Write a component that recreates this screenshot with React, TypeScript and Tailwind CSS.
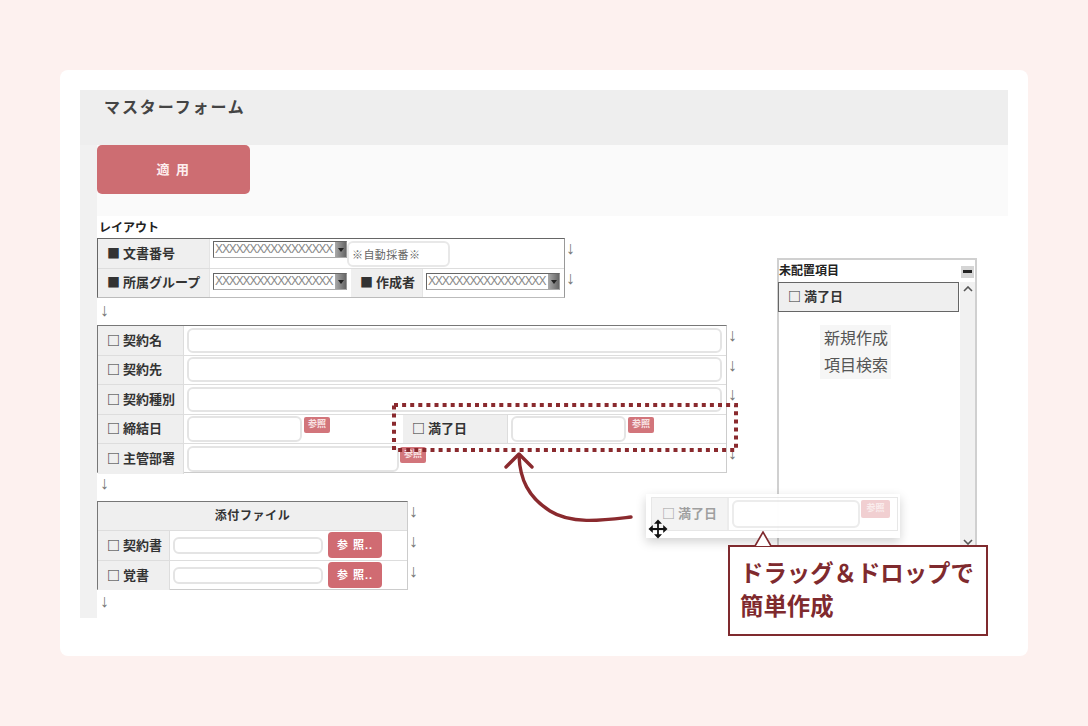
const cjk = "font-['Liberation_Sans','Noto_Sans_CJK_JP',sans-serif]";

function Arrow() {
  return <span className="block text-[18px] leading-none text-[#777] font-['Liberation_Sans',sans-serif]">↓</span>;
}

function Label({ text, className = "" }: { text: string; className?: string }) {
  return (
    <div className={`flex items-center bg-[#efefef] pb-[2px] pl-[9px] text-[13px] font-semibold text-[#333] whitespace-nowrap font-['Noto_Sans_CJK_JP',sans-serif] ${className}`}>
      {text}
    </div>
  );
}

function Select({ className = "" }: { className?: string }) {
  return (
    <div className={`flex h-[17px] w-[134px] border-[1.5px] border-[#666] border-r-[#999] border-b-[#aaa] bg-white ${className}`}>
      <span className="flex-1 whitespace-nowrap pl-[1px] text-[12px] leading-[14px] tracking-[-1.1px] text-[#888]">XXXXXXXXXXXXXXXXX</span>
      <span className="flex w-[11px] items-center justify-center bg-gradient-to-r from-[#aaa] to-[#666]">
        <svg width="6" height="4" viewBox="0 0 6 4" fill="#222"><path d="M0 0h6L3 4z" /></svg>
      </span>
    </div>
  );
}

function Input({ className = "" }: { className?: string }) {
  return <div className={`rounded-[6px] border-2 border-[#e4e4e4] bg-white ${className}`}></div>;
}

function SmallRef({ className = "" }: { className?: string }) {
  return (
    <div className={`flex h-[16px] w-[26px] items-center justify-center rounded-[2px] bg-[#d2757b] text-[9px] font-semibold text-[#f8e3e3] ${className}`}>
      参照
    </div>
  );
}

function BigRef() {
  return (
    <div className="ml-[5px] flex h-[26px] w-[54px] items-center justify-center rounded-[4px] bg-[#d06b72] text-[11px] font-bold tracking-[1px] text-white whitespace-pre">
      参 照..
    </div>
  );
}

function FieldRow({ label, children, last }: { label: string; children: React.ReactNode; last?: boolean }) {
  return (
    <div className={`flex h-[29.5px] ${last ? "" : "border-b border-[#ddd]"}`}>
      <Label text={label} className="w-[86px] border-r border-[#ddd]" />
      <div className="flex flex-1 items-center pl-[3px]">{children}</div>
    </div>
  );
}

export default function App() {
  return (
    <div className={`h-[726px] w-[1088px] overflow-hidden bg-[#fdf1ef] px-[60px] pt-[70px] ${cjk}`}>
      <div className="relative h-[586px] w-[968px] rounded-[8px] bg-white p-[20px]">
        {/* header */}
        <div className="h-[55px] bg-[#eeeeee] pl-[24px] pt-[5px] text-[16px] leading-[26px] font-bold tracking-[1.9px] text-[#444]">
          マスターフォーム
        </div>

        <div className="flex h-[473px]">
          <div className="w-[17px] bg-[#f1f1f1]"></div>
          <div className="flex-1">
            {/* toolbar */}
            <div className="h-[71px] bg-[#fafafa]">
              <div className="flex h-[49px] w-[153px] items-center justify-center rounded-[5px] bg-[#cd6d72] text-[13px] font-bold tracking-[1.5px] text-[#fdeeee]">
                適 用
              </div>
            </div>

            <div className="flex justify-between pr-[31px]">
              {/* layout forms */}
              <div className="w-[660px]">
                <div className="h-[22px] pl-[2px] pt-[4px] text-[12px] leading-[17px] font-bold text-[#222]">レイアウト</div>

                <div className="flex h-[60px]">
                  <div className="h-[60px] w-[468px] border border-r-[#999] border-[#666] border-b-[#bbb]">
                    <div className="flex h-[30px] border-b border-[#ddd]">
                      <Label text="■ 文書番号" className="w-[112px] border-r border-[#e4e4e4]" />
                      <div className="flex pl-[3px] pt-[2px]">
                        <Select />
                        <div className="h-[26px] w-[103px] rounded-[6px] border-2 border-[#e8e8e8] bg-white pl-[3px] text-[11px] leading-[25px] tracking-[0.4px] text-[#666]">
                          ※自動採番※
                        </div>
                      </div>
                    </div>
                    <div className="flex h-[28px]">
                      <Label text="■ 所属グループ" className="w-[112px] border-r border-[#e4e4e4]" />
                      <div className="w-[141px] pl-[3px] pt-[4px]">
                        <Select />
                      </div>
                      <Label text="■ 作成者" className="w-[72px] border-r border-[#e4e4e4]" />
                      <div className="pl-[3px] pt-[4px]">
                        <Select />
                      </div>
                    </div>
                  </div>
                  <div className="flex flex-col pl-[1px] pt-[1px]">
                    <div className="h-[30px] shrink-0"><Arrow /></div>
                    <div className="h-[27px] shrink-0"><Arrow /></div>
                  </div>
                </div>

                <div className="h-[27px] pl-[3px] pt-[3px]"><Arrow /></div>

                <div className="flex h-[148px]">
                  <div className="h-[148px] w-[630px] border border-[#ccc] border-t-[#777] border-l-[#777]">
                    <FieldRow label="□ 契約名"><Input className="h-[25px] w-[535px]" /></FieldRow>
                    <FieldRow label="□ 契約先"><Input className="h-[25px] w-[535px]" /></FieldRow>
                    <FieldRow label="□ 契約種別"><Input className="h-[25px] w-[535px]" /></FieldRow>
                    <FieldRow label="□ 締結日">
                      <Input className="h-[26px] w-[115px]" />
                      <SmallRef className="mb-[8px] ml-[2px]" />
                      <Label text="□ 満了日" className="ml-[73px] h-full w-[105px] border-r border-[#ddd]" />
                      <Input className="ml-[3px] h-[26px] w-[115px]" />
                      <SmallRef className="mb-[8px] ml-[2px]" />
                    </FieldRow>
                    <FieldRow label="□ 主管部署" last>
                      <Input className="h-[26px] w-[212px]" />
                      <SmallRef className="mb-[8px] ml-[1px]" />
                    </FieldRow>
                  </div>
                  <div className="flex h-[148px] flex-col overflow-hidden pl-[1px] pt-[1px]">
                    <div className="h-[29.5px] shrink-0"><Arrow /></div>
                    <div className="h-[29.5px] shrink-0"><Arrow /></div>
                    <div className="h-[29.5px] shrink-0"><Arrow /></div>
                    <div className="h-[29.5px] shrink-0"></div>
                    <div className="h-[26px] shrink-0"><Arrow /></div>
                  </div>
                </div>

                <div className="h-[28px] pl-[3px] pt-[1px]"><Arrow /></div>

                <div className="flex h-[89px]">
                  <div className="h-[89px] w-[311px] border border-[#ccc] border-t-[#777] border-l-[#777]">
                    <div className="flex h-[29px] items-center justify-center border-b border-[#ddd] bg-[#efefef] text-[12px] font-semibold tracking-[0.6px] text-[#333]">
                      添付ファイル
                    </div>
                    {["□ 契約書", "□ 覚書"].map((t, i) => (
                      <div key={t} className={`flex h-[29.5px] ${i === 0 ? "border-b border-[#ddd]" : ""}`}>
                        <Label text={t} className="w-[72px] border-r border-[#ddd]" />
                        <div className="flex items-center pl-[3px]">
                          <Input className="h-[17px] w-[150px] rounded-[5px]" />
                          <BigRef />
                        </div>
                      </div>
                    ))}
                  </div>
                  <div className="flex flex-col pl-[1px] pt-[1px]">
                    <div className="h-[30px] shrink-0"><Arrow /></div>
                    <div className="h-[30px] shrink-0"><Arrow /></div>
                    <div className="h-[26px] shrink-0"><Arrow /></div>
                  </div>
                </div>

                <div className="pl-[3px] pt-[2px]"><Arrow /></div>
              </div>

              {/* unplaced items */}
              <div className="mt-[42px] h-[288px] w-[200px] border-x-2 border-t-2 border-[#d0d0d0]">
                <div className="flex h-[22px] items-center justify-between pr-[1px]">
                  <span className="text-[12px] font-bold text-[#222]">未配置項目</span>
                  <span className="mt-[1px] flex h-[12px] w-[13px] items-center justify-center bg-[#d5d5d5]">
                    <span className="h-[3px] w-[9px] bg-[#222]"></span>
                  </span>
                </div>
                <div className="flex h-[264px]">
                  <div className="w-[180px]">
                    <div className="-ml-[1px] flex h-[30px] items-center border border-[#666] bg-[#efefef] pb-[2px] pl-[9px] text-[13px] font-bold text-[#333] font-['Noto_Sans_CJK_JP',sans-serif]">
                      □ 満了日
                    </div>
                    <div className="ml-[41px] mt-[13px] h-[54px] w-[71px] bg-[#f6f6f6] pl-[4px] text-[16px] leading-[27px] text-[#555]">
                      <div>新規作成</div>
                      <div>項目検索</div>
                    </div>
                  </div>
                  <div className="ml-[1px] flex flex-1 flex-col items-center justify-between bg-[#f1f1f1] pb-[1px] pt-[4px]">
                    <svg width="10" height="6" viewBox="0 0 10 6" fill="none" stroke="#555" strokeWidth="1.6"><path d="M1 5l4-4 4 4" /></svg>
                    <svg width="10" height="6" viewBox="0 0 10 6" fill="none" stroke="#555" strokeWidth="1.6"><path d="M1 1l4 4 4-4" /></svg>
                  </div>
                </div>
              </div>
            </div>
          </div>
        </div>

        {/* drop target highlight */}
        <svg className="absolute left-[332px] top-[333px]" width="346" height="49" viewBox="0 0 346 49" fill="none" stroke="#8a2a2e" strokeWidth="4">
          <rect x="2" y="2" width="342" height="45" strokeDasharray="4 4.1" />
        </svg>

        {/* drag arrow */}
        <svg className="absolute left-[440px] top-[375px]" width="140" height="85" viewBox="0 0 140 85" fill="none" stroke="#8a2a2e" strokeWidth="3.4" strokeLinecap="round" strokeLinejoin="round">
          <path d="M131 72C105 75 72 80 50 66 28 52 20 34 19 11" />
          <path d="M6 22L19 9 32 22" />
        </svg>

        {/* dragged field */}
        <div className="absolute left-[586px] top-[424px] flex h-[44px] w-[254px] bg-white/95 py-[3px] pl-[5px] pr-[2px] shadow-[0_4px_10px_rgba(0,0,0,0.18)]">
          <div className="flex h-[34px] w-full border border-[#ddd] opacity-70">
            <Label text="□ 満了日" className="w-[77px] border-r-2 border-[#e4e4e4] pl-[10px] font-medium text-[#777]" />
            <Input className="ml-[3px] mt-[2px] h-[28px] w-[128px]" />
            <SmallRef className="ml-[1px] mt-[2px] h-[18px] w-[29px] bg-[#eab5b8] opacity-90" />
          </div>
        </div>

        {/* move cursor */}
        <svg className="absolute left-[588px] top-[449px]" width="20" height="20" viewBox="0 0 20 20" fill="#111">
          <path d="M10 .5l4 4.3h-3.1v4.3h4.3V6l4.3 4-4.3 4v-3.1h-4.3v4.3H14l-4 4.3-4-4.3h3.1v-4.3H4.8V14L.5 10l4.3-4v3.1h4.3V4.8H6z" />
        </svg>

        {/* callout */}
        <div className="absolute left-[668px] top-[475px] h-[91px] w-[260px] border-2 border-[#7f2a2e] bg-white pl-[10px] pt-[11px] text-[23.4px] leading-[33px] font-semibold text-[#7f2a2e]">
          ドラッグ＆ドロップで
          <br />
          簡単作成
        </div>
        <svg className="absolute left-[694px] top-[461px]" width="18" height="16" viewBox="0 0 18 16" fill="#fff" stroke="#7f2a2e" strokeWidth="1.6">
          <path d="M1 15L9 1l8 14" />
        </svg>
      </div>
    </div>
  );
}
